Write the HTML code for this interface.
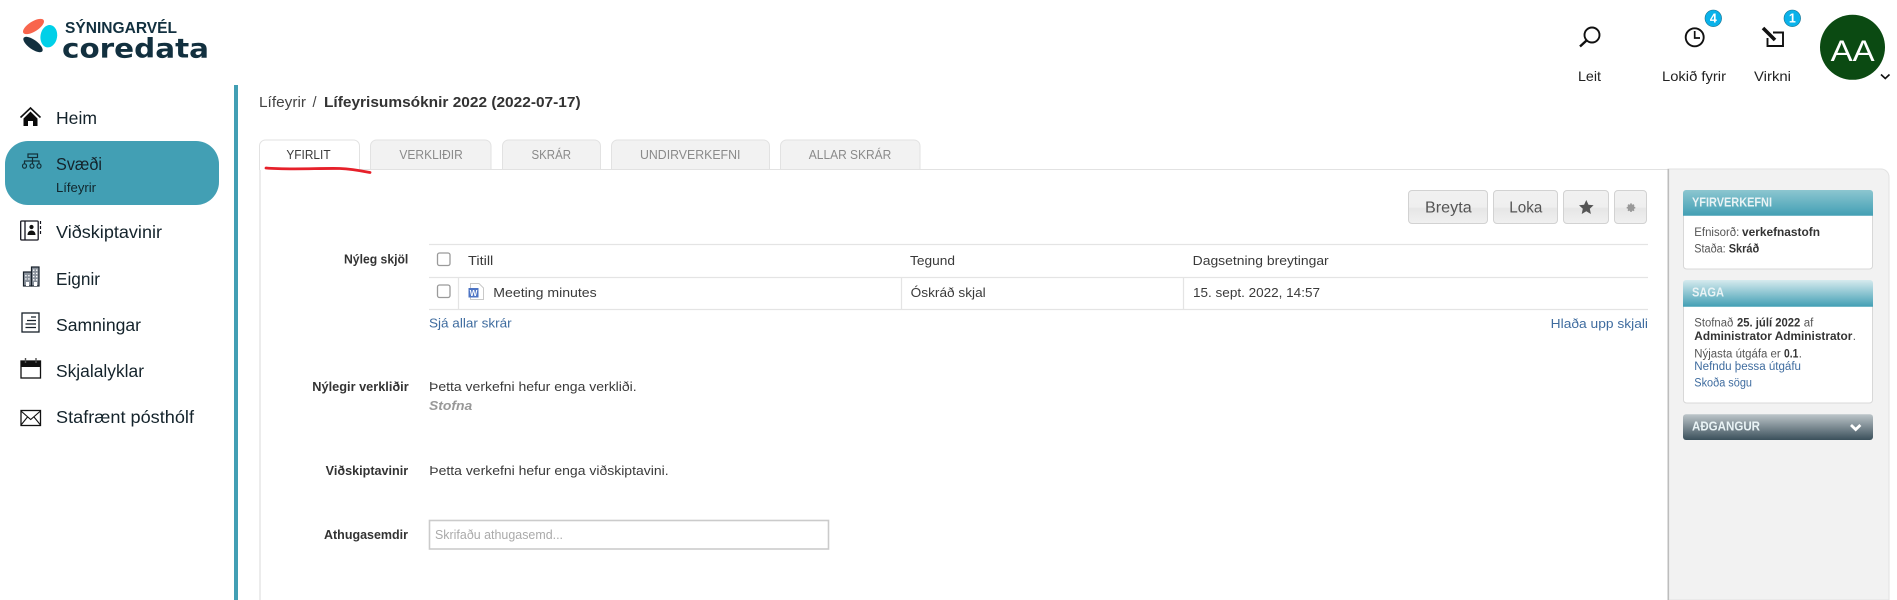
<!DOCTYPE html>
<html lang="is"><head><meta charset="utf-8"><title>Yfirlit</title>
<style>
html,body{margin:0;padding:0;background:#fff;width:1897px;height:600px;overflow:hidden}
svg{display:block;position:absolute;left:0;top:0}
text{font-family:"Liberation Sans",sans-serif;font-size:12.5px;fill:#3a3a3a}
.nav{font-size:17.5px;fill:#14232b}
.b{font-weight:700;fill:#333}
.l{fill:#3f6c9f}
.h{font-size:12.5px;font-weight:700;fill:#e9f3f5}
.tab{font-size:12.5px;fill:#8a8a8a}
.top{font-size:14px;fill:#222}
</style></head><body>
<svg width="1897" height="600" viewBox="0 0 1897 600" xmlns="http://www.w3.org/2000/svg">
<defs>
<linearGradient id="g1" x1="0" y1="0" x2="0" y2="1"><stop offset="0" stop-color="#8cc6d0"/><stop offset="1" stop-color="#429fb4"/></linearGradient>
<linearGradient id="g2" x1="0" y1="0" x2="0" y2="1"><stop offset="0" stop-color="#d6eaee"/><stop offset="1" stop-color="#429fb4"/></linearGradient>
<linearGradient id="g3" x1="0" y1="0" x2="0" y2="1"><stop offset="0" stop-color="#bcc5c9"/><stop offset="1" stop-color="#3b505b"/></linearGradient>
<linearGradient id="btn" x1="0" y1="0" x2="0" y2="1"><stop offset="0" stop-color="#f1f1f1"/><stop offset=".5" stop-color="#efefef"/><stop offset=".55" stop-color="#e6e6e6"/><stop offset="1" stop-color="#f0f0f0"/></linearGradient>
</defs>

<!-- logo -->
<ellipse cx="33.5" cy="26.5" rx="12" ry="5" transform="rotate(-32 33.5 26.5)" fill="#f8654d"/>
<ellipse cx="33" cy="44.5" rx="11.5" ry="4.6" transform="rotate(36 33 44.5)" fill="#12303f"/>
<ellipse cx="48.8" cy="36.2" rx="9" ry="12" transform="rotate(10 48.8 36.2)" fill="#00d0e8" stroke="#fff" stroke-width="1.4"/>
<text x="65" y="33" style="font-size:15.5px;font-weight:700;fill:#12303f" textLength="112" lengthAdjust="spacingAndGlyphs">SÝNINGARVÉL</text>
<text x="62" y="57.5" style="font-family:'DejaVu Sans',sans-serif;font-size:27px;font-weight:700;fill:#12303f" textLength="147" lengthAdjust="spacingAndGlyphs">coredata</text>

<!-- sidebar nav -->
<rect x="234" y="85" width="4" height="515" fill="#429fb4"/>
<rect x="5" y="141" width="214" height="64" rx="23" fill="#429fb4"/>
<text class="nav" x="56" y="124" textLength="41" lengthAdjust="spacingAndGlyphs">Heim</text>
<text class="nav" x="56" y="170" textLength="46" lengthAdjust="spacingAndGlyphs">Svæði</text>
<text x="56" y="192" style="font-size:13px;fill:#10252c" textLength="40" lengthAdjust="spacingAndGlyphs">Lífeyrir</text>
<text class="nav" x="56" y="238" textLength="106" lengthAdjust="spacingAndGlyphs">Viðskiptavinir</text>
<text class="nav" x="56" y="285" textLength="44" lengthAdjust="spacingAndGlyphs">Eignir</text>
<text class="nav" x="56" y="331" textLength="85" lengthAdjust="spacingAndGlyphs">Samningar</text>
<text class="nav" x="56" y="377" textLength="88" lengthAdjust="spacingAndGlyphs">Skjalalyklar</text>
<text class="nav" x="56" y="423" textLength="138" lengthAdjust="spacingAndGlyphs">Stafrænt pósthólf</text>

<!-- home -->
<path d="M20.5 117.5 L30.5 108 L40.5 117.5" fill="none" stroke="#111" stroke-width="1.6"/>
<path d="M23.5 118.5 L30.5 111.5 L37.5 118.5 V126 H33 V121 H28 V126 H23.5 Z" fill="#0a0a0a"/>
<!-- org chart -->
<g fill="none" stroke="#123039" stroke-width="1.2">
<rect x="28" y="154" width="9.5" height="3.5"/>
<path d="M32.5 157.5 V164 M24.5 164 V161 H39 V164"/>
<ellipse cx="24.5" cy="166" rx="2" ry="2.2"/><ellipse cx="32" cy="166" rx="2" ry="2.2"/><ellipse cx="39" cy="166" rx="2" ry="2.2"/>
</g>
<!-- contact book -->
<g fill="none" stroke="#15151f" stroke-width="1.3">
<rect x="20.7" y="221" width="17.5" height="19" rx="1"/>
<path d="M25 221 V240"/>
<path d="M40.5 221 V224 M40.5 226 V229 M40.5 231 V234" stroke-width="1.2"/>
</g>
<circle cx="31.5" cy="227" r="2.1" fill="#111"/><path d="M27.5 235 C27.5 229 35.5 229 35.5 235 Z" fill="#111"/>
<!-- buildings -->
<rect x="23.5" y="272" width="8" height="14" fill="#8a929c" stroke="#18212b" stroke-width="1.2"/>
<rect x="31.5" y="267" width="7.5" height="19" fill="#8a929c" stroke="#18212b" stroke-width="1.2"/>
<path d="M25.2 275h1.4v1.4h-1.4zM28.2 275h1.4v1.4h-1.4zM25.2 278.2h1.4v1.4h-1.4zM28.2 278.2h1.4v1.4h-1.4zM33 269.5h1.4v1.4h-1.4zM36 269.5h1.4v1.4h-1.4zM33 272.7h1.4v1.4h-1.4zM36 272.7h1.4v1.4h-1.4zM33 275.9h1.4v1.4h-1.4zM36 275.9h1.4v1.4h-1.4zM33 279.1h1.4v1.4h-1.4zM36 279.1h1.4v1.4h-1.4z" fill="#fff"/>
<rect x="26" y="282" width="3" height="4" fill="#fff"/><rect x="34" y="282" width="3" height="4" fill="#fff"/>
<!-- contract -->
<rect x="22" y="313" width="17" height="19" fill="none" stroke="#17202a" stroke-width="1.3"/>
<path d="M31 317 H36 M27 320.5 H36 M25.5 324 H36 M25.5 327.5 H36" stroke="#17202a" stroke-width="1.2"/>
<!-- calendar -->
<rect x="21" y="361" width="19.5" height="17" fill="none" stroke="#111" stroke-width="1.3"/>
<rect x="21" y="361" width="19.5" height="6" fill="#111"/>
<path d="M25.5 358 V363 M36 358 V363" stroke="#555" stroke-width="1.4"/>
<!-- envelope -->
<rect x="21" y="410.5" width="19.5" height="15" fill="none" stroke="#111" stroke-width="1.3"/>
<path d="M21 411 L30.7 419.5 L40.5 411 M21 425 L27.5 417 M40.5 425 L34 417" fill="none" stroke="#111" stroke-width="1.1"/>

<!-- header icons -->
<circle cx="1592" cy="35" r="7.5" fill="none" stroke="#111" stroke-width="1.9"/>
<path d="M1586.5 40.5 L1580 46.5" stroke="#111" stroke-width="2.4"/>
<circle cx="1694.7" cy="37.3" r="9" fill="none" stroke="#111" stroke-width="1.9"/>
<path d="M1694.7 31 V38 H1700" fill="none" stroke="#111" stroke-width="1.7"/>
<path d="M1773 32.5 H1783 V46 H1767.5 V38" fill="none" stroke="#111" stroke-width="1.9"/>
<path d="M1763 28 L1775 40" stroke="#111" stroke-width="3.6"/>
<circle cx="1713.3" cy="18.3" r="8.3" fill="#0ab2ea" stroke="#16708e" stroke-width=".6"/><circle cx="1792.3" cy="18.3" r="8.3" fill="#0ab2ea" stroke="#16708e" stroke-width=".6"/>
<text x="1713.3" y="22.7" text-anchor="middle" style="font-size:12.5px;font-weight:700;fill:#fff">4</text>
<text x="1792.3" y="22.7" text-anchor="middle" style="font-size:12.5px;font-weight:700;fill:#fff">1</text>
<text class="top" x="1578" y="81" textLength="23" lengthAdjust="spacingAndGlyphs">Leit</text>
<text class="top" x="1662" y="81" textLength="64" lengthAdjust="spacingAndGlyphs">Lokið fyrir</text>
<text class="top" x="1754" y="81" textLength="37" lengthAdjust="spacingAndGlyphs">Virkni</text>
<circle cx="1852.5" cy="47.3" r="32.5" fill="#0b4a12"/>
<text x="1830.7" y="61" style="font-size:29.5px;fill:#fff" textLength="44" lengthAdjust="spacingAndGlyphs">AA</text>
<path d="M1881 74.5 L1885.3 78.5 L1889.5 74.5" fill="none" stroke="#111" stroke-width="1.6"/>

<!-- breadcrumb -->
<text x="259" y="107" style="font-size:14.5px;fill:#444" textLength="47" lengthAdjust="spacingAndGlyphs">Lífeyrir</text>
<text x="312.5" y="107" style="font-size:14.5px;fill:#444">/</text>
<text x="324" y="107" style="font-size:14.5px;font-weight:700;fill:#333" textLength="256.6" lengthAdjust="spacingAndGlyphs">Lífeyrisumsóknir 2022 (2022-07-17)</text>

<!-- tabs -->
<g fill="#f2f2f2" stroke="#e2e2e2">
<path d="M370.5 169 V146 a6 6 0 0 1 6 -6 H485 a6 6 0 0 1 6 6 V169"/>
<path d="M502.5 169 V146 a6 6 0 0 1 6 -6 H594.5 a6 6 0 0 1 6 6 V169"/>
<path d="M611.5 169 V146 a6 6 0 0 1 6 -6 H763.5 a6 6 0 0 1 6 6 V169"/>
<path d="M780.5 169 V146 a6 6 0 0 1 6 -6 H914 a6 6 0 0 1 6 6 V169"/>
</g>
<path d="M259.5 172 V146 a6 6 0 0 1 6 -6 H353.5 a6 6 0 0 1 6 6 V170" fill="#fff" stroke="#e2e2e2"/>
<text class="tab" x="286.4" y="159" style="fill:#3a3a3a" textLength="44.2" lengthAdjust="spacingAndGlyphs">YFIRLIT</text>
<text class="tab" x="399.4" y="159" textLength="63.4" lengthAdjust="spacingAndGlyphs">VERKLIÐIR</text>
<text class="tab" x="531.5" y="159" textLength="39.5" lengthAdjust="spacingAndGlyphs">SKRÁR</text>
<text class="tab" x="640" y="159" textLength="100.4" lengthAdjust="spacingAndGlyphs">UNDIRVERKEFNI</text>
<text class="tab" x="808.8" y="159" textLength="82.5" lengthAdjust="spacingAndGlyphs">ALLAR SKRÁR</text>

<!-- panel -->
<path d="M359.5 169.5 H1668" stroke="#e2e2e2" fill="none"/>
<rect x="259" y="170" width="2" height="430" fill="#ececec"/>
<path d="M1668 600 V169 H1881 a8 8 0 0 1 8 8 V600 Z" fill="#f2f2f2" stroke="#e2e2e2"/>
<rect x="1667.5" y="169" width="1.6" height="431" fill="#bdbdbd"/>
<path d="M266 168 C290 170 320 168 340 168.5 C352 169 362 171 370 172.5" fill="none" stroke="#e6202a" stroke-width="2.8" stroke-linecap="round"/>

<!-- buttons -->
<g fill="url(#btn)" stroke="#d2d2d2">
<rect x="1408.5" y="190.5" width="79" height="33" rx="3.5"/>
<rect x="1493.5" y="190.5" width="64" height="33" rx="3.5"/>
<rect x="1563.5" y="190.5" width="45" height="33" rx="3.5"/>
<rect x="1614.5" y="190.5" width="32" height="33" rx="3.5"/>
</g>
<text x="1425" y="212.7" style="font-size:15.5px;fill:#555" textLength="46.7" lengthAdjust="spacingAndGlyphs">Breyta</text>
<text x="1509.3" y="212.7" style="font-size:15.5px;fill:#555" textLength="33" lengthAdjust="spacingAndGlyphs">Loka</text>
<path d="M1586.3 200 L1588.5 204.8 L1593.6 205.3 L1589.8 208.8 L1590.9 214 L1586.3 211.3 L1581.7 214 L1582.8 208.8 L1579 205.3 L1584.1 204.8 Z" fill="#555"/>
<circle cx="1631" cy="207.7" r="3.4" fill="#999"/>
<path d="M1631 203.4 V212 M1626.7 207.7 H1635.3 M1628 204.7 L1634 210.7 M1634 204.7 L1628 210.7" stroke="#999" stroke-width="1.6"/>

<!-- table -->
<g stroke="#e4e4e4" stroke-width="1.2">
<path d="M429 244.5 H1648 M429 277.5 H1648 M429 309.5 H1648"/>
<path d="M458.5 277.5 V309.5 M901.5 277.5 V309.5 M1183.5 277.5 V309.5"/>
</g>
<rect x="437.5" y="253" width="12.5" height="12.5" rx="2" fill="#fff" stroke="#9a9a9a" stroke-width="1.3"/>
<rect x="437.5" y="285" width="12.5" height="12.5" rx="2" fill="#fff" stroke="#9a9a9a" stroke-width="1.3"/>
<text x="468" y="265" textLength="25.3" lengthAdjust="spacingAndGlyphs">Titill</text>
<text x="910" y="265" textLength="45" lengthAdjust="spacingAndGlyphs">Tegund</text>
<text x="1192.7" y="265" textLength="136" lengthAdjust="spacingAndGlyphs">Dagsetning breytingar</text>
<path d="M470.5 283.5 H479 L483.5 288 V299.5 H470.5 Z" fill="#fff" stroke="#c9c9c9"/>
<rect x="468.5" y="288" width="10" height="9.5" fill="#4d74c4"/>
<text x="473.5" y="296" text-anchor="middle" style="font-size:8px;font-weight:700;fill:#fff">W</text>
<text x="493.3" y="296.8" textLength="103.4" lengthAdjust="spacingAndGlyphs">Meeting minutes</text>
<text x="910.7" y="297" textLength="75" lengthAdjust="spacingAndGlyphs">Óskráð skjal</text>
<text x="1193" y="297" textLength="127" lengthAdjust="spacingAndGlyphs">15. sept. 2022, 14:57</text>
<text class="l" x="429" y="327.7" textLength="82.7" lengthAdjust="spacingAndGlyphs">Sjá allar skrár</text>
<text class="l" x="1550.7" y="328" textLength="97.3" lengthAdjust="spacingAndGlyphs">Hlaða upp skjali</text>

<!-- rows -->
<text class="b" x="344" y="263.3" textLength="64.3" lengthAdjust="spacingAndGlyphs">Nýleg skjöl</text>
<text class="b" x="312.3" y="391" textLength="96.4" lengthAdjust="spacingAndGlyphs">Nýlegir verkliðir</text>
<text x="429" y="391" textLength="207.7" lengthAdjust="spacingAndGlyphs">Þetta verkefni hefur enga verkliði.</text>
<text x="429" y="410" style="font-weight:700;font-style:italic;fill:#999" textLength="43.3" lengthAdjust="spacingAndGlyphs">Stofna</text>
<text class="b" x="325.7" y="475" textLength="82.5" lengthAdjust="spacingAndGlyphs">Viðskiptavinir</text>
<text x="429.3" y="475" textLength="239.3" lengthAdjust="spacingAndGlyphs">Þetta verkefni hefur enga viðskiptavini.</text>
<text class="b" x="324" y="539" textLength="84" lengthAdjust="spacingAndGlyphs">Athugasemdir</text>
<rect x="429.5" y="520.5" width="399" height="28.5" fill="#fff" stroke="#cbcbcb" stroke-width="1.6"/>
<text x="435" y="539" style="fill:#aaa" textLength="128" lengthAdjust="spacingAndGlyphs">Skrifaðu athugasemd...</text>

<!-- sidebar box 1 -->
<rect x="1683.5" y="200" width="189" height="69" rx="3" fill="#fff" stroke="#d8d8d8"/>
<path d="M1683 215.7 V193 a3 3 0 0 1 3 -3 H1870 a3 3 0 0 1 3 3 V215.7 Z" fill="url(#g1)"/>
<text class="h" x="1692" y="206.7" textLength="80" lengthAdjust="spacingAndGlyphs">YFIRVERKEFNI</text>
<text x="1694.3" y="236" style="font-size:11.5px;fill:#555" textLength="45" lengthAdjust="spacingAndGlyphs">Efnisorð:</text>
<text class="b" x="1742" y="236" style="font-size:11.5px" textLength="78" lengthAdjust="spacingAndGlyphs">verkefnastofn</text>
<text x="1694.3" y="252.7" style="font-size:11.5px;fill:#555" textLength="31.4" lengthAdjust="spacingAndGlyphs">Staða:</text>
<text class="b" x="1728.7" y="252.7" style="font-size:11.5px" textLength="30.6" lengthAdjust="spacingAndGlyphs">Skráð</text>

<!-- sidebar box 2 -->
<rect x="1683.5" y="290" width="189" height="113" rx="3" fill="#fff" stroke="#d8d8d8"/>
<path d="M1683 306.7 V283 a3 3 0 0 1 3 -3 H1870 a3 3 0 0 1 3 3 V306.7 Z" fill="url(#g2)"/>
<text class="h" x="1692" y="296.7" textLength="32" lengthAdjust="spacingAndGlyphs">SAGA</text>
<text x="1694.3" y="326.7" style="font-size:11.5px;fill:#555" textLength="39" lengthAdjust="spacingAndGlyphs">Stofnað</text>
<text class="b" x="1737" y="326.7" style="font-size:11.5px" textLength="63.3" lengthAdjust="spacingAndGlyphs">25. júlí 2022</text>
<text x="1803.7" y="326.7" style="font-size:11.5px;fill:#555" textLength="9.6" lengthAdjust="spacingAndGlyphs">af</text>
<text class="b" x="1694.3" y="340" style="font-size:11.5px" textLength="158" lengthAdjust="spacingAndGlyphs">Administrator Administrator</text>
<text x="1852.8" y="340" style="font-size:11.5px;fill:#555">.</text>
<text x="1694.3" y="357.3" style="font-size:11.5px;fill:#555" textLength="86.4" lengthAdjust="spacingAndGlyphs">Nýjasta útgáfa er</text>
<text class="b" x="1784" y="357.3" style="font-size:11.5px" textLength="14.3" lengthAdjust="spacingAndGlyphs">0.1</text>
<text x="1798.8" y="357.3" style="font-size:11.5px;fill:#555">.</text>
<text class="l" x="1694.3" y="370" style="font-size:11.5px" textLength="106.7" lengthAdjust="spacingAndGlyphs">Nefndu þessa útgáfu</text>
<text class="l" x="1694.3" y="386.7" style="font-size:11.5px" textLength="57.7" lengthAdjust="spacingAndGlyphs">Skoða sögu</text>

<!-- sidebar box 3 -->
<rect x="1683" y="414.3" width="190" height="25.7" rx="3" fill="url(#g3)"/>
<text class="h" x="1692" y="430.7" textLength="68" lengthAdjust="spacingAndGlyphs">AÐGANGUR</text>
<path d="M1851 425 L1855.7 429.5 L1860.4 425" fill="none" stroke="#fff" stroke-width="2.8"/>
</svg>
</body></html>
